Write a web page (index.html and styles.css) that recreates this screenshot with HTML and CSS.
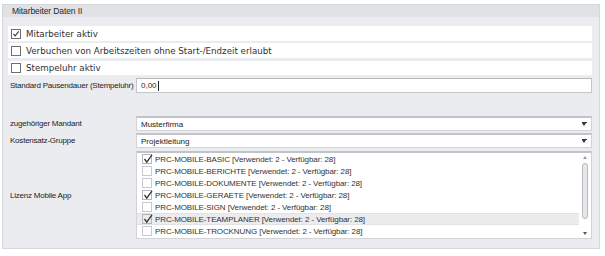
FILE: index.html
```html
<!DOCTYPE html>
<html lang="de">
<head>
<meta charset="utf-8">
<link rel="stylesheet" href="styles.css">
</head>
<body>
<div class="panel">
  <div class="panel-head">Mitarbeiter Daten II</div>
  <div class="panel-body">
    <div class="check-row r1"><span class="cb checked"><svg viewBox="0 0 10 10"><path d="M1.8 4.8 L4 7.4 L8.4 1.8" /></svg></span><span class="cl">Mitarbeiter aktiv</span></div>
    <div class="check-row r2"><span class="cb"></span><span class="cl">Verbuchen von Arbeitszeiten ohne Start-/Endzeit erlaubt</span></div>
    <div class="check-row r3"><span class="cb"></span><span class="cl">Stempeluhr aktiv</span></div>
    <div class="field-row r4">
      <label class="lbl">Standard Pausendauer (Stempeluhr)</label>
      <div class="input"><span>0,00</span><span class="caret"></span></div>
    </div>
    <div class="field-row r5">
      <label class="lbl">zugehöriger Mandant</label>
      <div class="select"><span>Musterfirma</span><span class="arr"></span></div>
    </div>
    <div class="field-row r6">
      <label class="lbl">Kostensatz-Gruppe</label>
      <div class="select"><span>Projektleitung</span><span class="arr"></span></div>
    </div>
    <div class="field-row r7">
      <label class="lbl">Lizenz Mobile App</label>
      <div class="listbox">
        <div class="items">
          <div class="item"><span class="lcb on"><svg viewBox="0 0 10 10"><path d="M1.5 5 L3.8 8.2 L9 0.8" /></svg></span>PRC-MOBILE-BASIC [Verwendet: 2 - Verfügbar: 28]</div>
          <div class="item"><span class="lcb"></span>PRC-MOBILE-BERICHTE [Verwendet: 2 - Verfügbar: 28]</div>
          <div class="item"><span class="lcb"></span>PRC-MOBILE-DOKUMENTE [Verwendet: 2 - Verfügbar: 28]</div>
          <div class="item"><span class="lcb on"><svg viewBox="0 0 10 10"><path d="M1.5 5 L3.8 8.2 L9 0.8" /></svg></span>PRC-MOBILE-GERAETE [Verwendet: 2 - Verfügbar: 28]</div>
          <div class="item"><span class="lcb"></span>PRC-MOBILE-SIGN [Verwendet: 2 - Verfügbar: 28]</div>
          <div class="item hl"><span class="lcb on"><svg viewBox="0 0 10 10"><path d="M1.5 5 L3.8 8.2 L9 0.8" /></svg></span>PRC-MOBILE-TEAMPLANER [Verwendet: 2 - Verfügbar: 28]</div>
          <div class="item"><span class="lcb"></span>PRC-MOBILE-TROCKNUNG [Verwendet: 2 - Verfügbar: 28]</div>
          <div class="item"><span class="lcb"></span></div>
        </div>
        <div class="sbar">
          <span class="sup"></span>
          <span class="thumb"></span>
          <span class="sdown"></span>
        </div>
      </div>
    </div>
  </div>
</div>
</body>
</html>
```
FILE: styles.css
```css
* { box-sizing: border-box; }
html, body { margin: 0; padding: 0; background: #ffffff; }
body {
  width: 605px;
  height: 256px;
  overflow: hidden;
  font-family: "Liberation Sans", Arial, sans-serif;
  color: #2d2d2d;
}
.panel {
  margin: 4px 0 0 2px;
  width: 598px;
  height: 245px;
  background: #ebecef;
  border: 1px solid #d6d7db;
}
.panel-head {
  height: 12px;
  line-height: 12px;
  background: #e1e2e6;
  padding-left: 9px;
  font-size: 8.5px;
  letter-spacing: -0.1px;
  color: #262626;
  white-space: nowrap;
}
.panel-body {
  padding: 9px 7px 0 5px;
  display: flex;
  flex-direction: column;
}
.check-row {
  height: 15px;
  background: #ffffff;
  display: flex;
  align-items: center;
  padding-left: 3px;
  font-family: "DejaVu Sans", Verdana, sans-serif;
  font-size: 8.7px;
  color: #303030;
  white-space: nowrap;
}
.r2 { margin-top: 2px; }
.r3 { margin-top: 3px; height: 14px; }
.cb {
  width: 10px;
  height: 10px;
  border: 1px solid #6f6f6f;
  background: #fff;
  margin-right: 5px;
  display: flex;
}
.cb svg { width: 8px; height: 8px; fill: none; stroke: #333; stroke-width: 1.3; }
.field-row {
  display: flex;
  align-items: center;
}
.lbl {
  width: 128px;
  flex: none;
  padding-left: 2px;
  font-size: 8px;
  letter-spacing: -0.22px;
  color: #222;
  white-space: nowrap;
}
.r4 { margin-top: 3px; height: 15px; }
.r5 { margin-top: 23px; height: 15px; }
.r6 { margin-top: 2px; height: 15px; }
.r7 { margin-top: 3px; height: 88px; }
.input {
  flex: 1;
  height: 15px;
  background: #fff;
  border: 1px solid #c4c5c9;
  border-top-color: #b8b9bd;
  display: flex;
  align-items: center;
  padding-left: 4px;
  font-size: 8px;
  white-space: nowrap;
}
.caret { width: 1px; height: 10px; background: #222; margin-left: 1px; }
.select {
  flex: 1;
  height: 15px;
  background: #fff;
  border: 1px solid #d2d3d7;
  border-top: 2px solid #c2c3c7;
  display: flex;
  align-items: center;
  padding-left: 4px;
  font-size: 8px;
  color: #222;
  white-space: nowrap;
}
.select span:first-child { flex: 1; }
.arr {
  width: 5px;
  height: 4px;
  margin-right: 4px;
  border-top: 1px solid #333;
  position: relative;
}
.arr::after {
  content: "";
  position: absolute;
  left: 0;
  top: 0;
  border-left: 2.5px solid transparent;
  border-right: 2.5px solid transparent;
  border-top: 3px solid #333;
}
.listbox {
  flex: 1;
  height: 88px;
  background: #fff;
  border: 1px solid #d2d3d7;
  border-top: 2px solid #c2c3c7;
  display: flex;
  overflow: hidden;
}
.items { flex: 1; }
.item {
  height: 12px;
  flex: none;
  display: flex;
  align-items: center;
  padding-left: 5px;
  font-size: 8px;
  letter-spacing: -0.1px;
  color: #333;
  white-space: nowrap;
}
.item.hl { background: #ececee; border-top: 1px solid #e2e2e4; border-bottom: 1px solid #e2e2e4; }
.lcb {
  width: 10px;
  height: 10px;
  flex: none;
  border: 1px solid #c9c9cc;
  margin-right: 3px;
  position: relative;
}
.lcb.on { border-color: #b5b5b8; }
.lcb svg { position: absolute; left: 0; top: -1px; width: 10px; height: 10px; fill: none; stroke: #333; stroke-width: 1.3; }
.sbar {
  width: 12px;
  flex: none;
  display: flex;
  flex-direction: column;
  align-items: center;
  padding: 3px 0 3px;
}
.sup, .sdown {
  width: 0; height: 0;
  border-left: 2.5px solid transparent;
  border-right: 2.5px solid transparent;
}
.sup { border-bottom: 3px solid #9a9a9e; }
.sdown { border-top: 3px solid #55555a; margin-top: auto; }
.thumb {
  width: 6px;
  height: 56px;
  margin-top: 4px;
  border: 1px solid #b9babe;
  border-radius: 3px;
  background: #e6e7ea;
}
```
